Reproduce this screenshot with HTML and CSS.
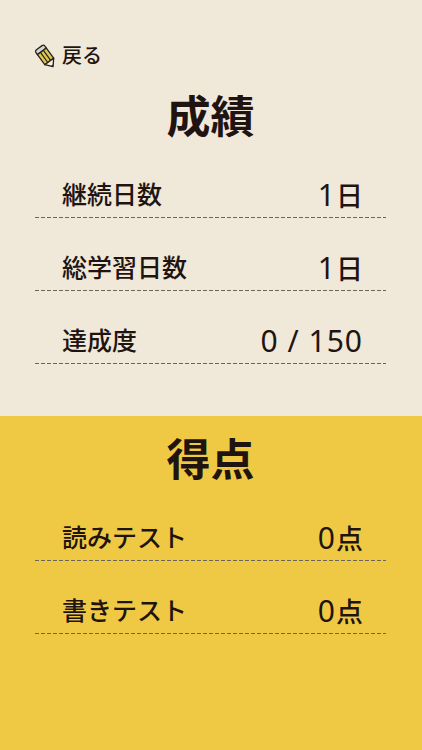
FILE: index.html
```html
<!DOCTYPE html>
<html lang="ja">
<head>
<meta charset="utf-8">
<title>成績</title>
<link rel="stylesheet" href="styles.css">
</head>
<body>
<main class="screen">
  <section class="panel panel-top">
    <a class="back">
      <svg class="pencil" viewBox="0 -1 24 24" width="24" height="24">
        <g transform="rotate(-36 12 12)">
          <path d="M8.500 0.500h7a2 2 0 0 1 2 2V5h-11V2.500a2 2 0 0 1 2-2z" fill="#d4d4d4" stroke="#222" stroke-width="1.300"/>
          <path d="M6.500 5h11v12.500h-11z" fill="#e0c54e" stroke="#222" stroke-width="1.300"/>
          <path d="M10.200 5v12.500M13.800 5v12.500" stroke="#222" stroke-width="1.200"/>
          <path d="M6.500 17.500h11L12 24z" fill="#f7f2e4" stroke="#222" stroke-width="1.300" stroke-linejoin="round"/>
          <path d="M10.500 22.200h3L12 24z" fill="#222"/>
        </g>
      </svg>
      <span>戻る</span>
    </a>
    <h1 class="title">成績</h1>
    <div class="row"><span>継続日数</span><span class="val">1<span class="unit">日</span></span></div>
    <div class="row"><span>総学習日数</span><span class="val">1<span class="unit">日</span></span></div>
    <div class="row"><span>達成度</span><span class="val">0 / 150</span></div>
  </section>
  <section class="panel panel-bottom">
    <h1 class="title">得点</h1>
    <div class="row"><span>読みテスト</span><span class="val">0<span class="unit">点</span></span></div>
    <div class="row"><span>書きテスト</span><span class="val">0<span class="unit">点</span></span></div>
  </section>
</main>
</body>
</html>
```
FILE: styles.css
```css
* { box-sizing: border-box; }
html, body { margin: 0; padding: 0; }
body {
  font-family: "Noto Sans", "Noto Sans CJK JP", sans-serif;
  color: #1f1410;
}
.screen { width: 422px; height: 750px; display: flex; flex-direction: column; overflow: hidden; }
.panel { padding: 0 36px 0 35px; }
.panel-top { height: 416px; background: #f0e8d9; padding-top: 42px; }
.panel-bottom { flex: 1; background: #f0c944; padding-top: 15px; }
.back { display: flex; align-items: center; gap: 4px; height: 28px; font-size: 20px; line-height: 28px; font-weight: 500; }
.pencil { display: block; flex: none; margin-left: -1px; }
.title { margin: 0 0 1px; text-align: center; font-size: 44px; line-height: 56px; font-weight: 700; }
.panel-top .title { margin-top: 18px; }
.row {
  display: flex; justify-content: space-between; align-items: center;
  height: 73px; padding: 27px 23px 1px 27px;
  background: repeating-linear-gradient(to right, #6b665c 0 4px, transparent 4px 6px) left bottom / 100% 1px no-repeat;
  font-size: 25px;
  font-weight: 500;
  line-height: 45px;
}
.val { font-size: 30px; font-weight: 400; letter-spacing: 1px; }
.unit { font-size: 27px; font-weight: 500; letter-spacing: 0; }
```
